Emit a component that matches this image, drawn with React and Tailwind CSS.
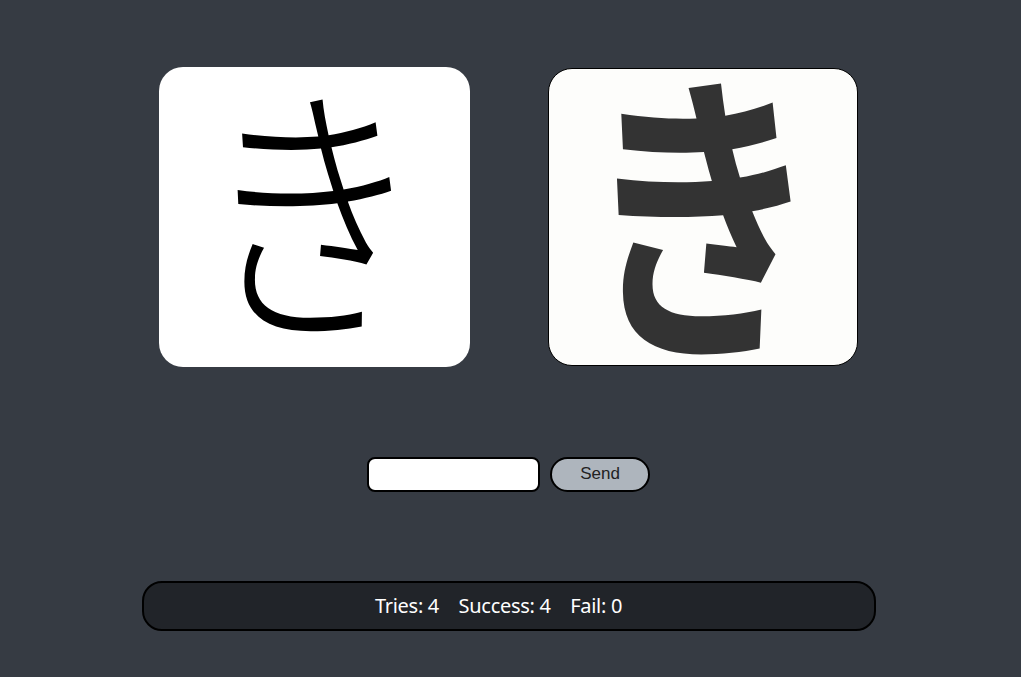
import React, { useState } from 'react';

const stats = { tries: 4, success: 4, fail: 0 };

export default function App() {
  const [answer, setAnswer] = useState('');

  return (
    <div className="min-h-[677px] w-full bg-[#363b43] flex flex-col items-center pt-[67px]">
      {/* kana cards */}
      <div className="flex items-start gap-[78px] ml-[-4px]">
        <div className="w-[311px] h-[300px] bg-white rounded-[24px] flex items-center justify-center">
          <span className="text-[280px] leading-[240px] text-black font-light font-['Noto_Sans_CJK_JP',sans-serif] scale-x-[0.8] mt-[-38px] ml-[-6px]">
            き
          </span>
        </div>
        <div className="w-[310px] h-[298px] mt-px bg-[#fdfdfb] border border-black rounded-[24px] flex items-center justify-center">
          <span className="text-[308px] leading-[250px] text-[#333333] font-bold font-['Noto_Sans_CJK_JP',sans-serif] scale-x-[0.78] mt-[-32px] ml-[-2px]">
            き
          </span>
        </div>
      </div>

      {/* answer form */}
      <form
        className="flex items-center gap-[10px] mt-[89px] ml-[-4px]"
        onSubmit={(e) => e.preventDefault()}
      >
        <input
          value={answer}
          onChange={(e) => setAnswer(e.target.value)}
          className="w-[173px] h-[35px] mt-px bg-white border-2 border-black rounded-[8px] px-2 outline-none font-['Liberation_Sans',sans-serif] text-[17px]"
        />
        <button
          type="submit"
          className="w-[100px] h-[35px] bg-[#aeb5bd] border-2 border-black rounded-full text-[17px] text-[#222] font-['Liberation_Sans',sans-serif]"
        >
          Send
        </button>
      </form>

      {/* score bar */}
      <div className="w-[734px] h-[50px] mt-[89px] ml-[-4px] bg-[#212429] border-2 border-black rounded-[20px] flex items-center justify-center text-white text-[20px] font-['Noto_Sans',sans-serif]">
        <span className="mr-[20px] tracking-[-0.3px]">
          Tries: {stats.tries}&nbsp;&nbsp;&nbsp; Success: {stats.success}&nbsp;&nbsp;&nbsp; Fail: {stats.fail}
        </span>
      </div>
    </div>
  );
}
